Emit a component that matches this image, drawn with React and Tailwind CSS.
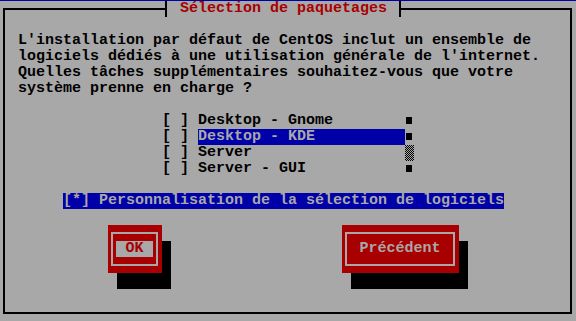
import React from 'react';

// newt text-mode dialog, 9x16 character cells
const lines = [
  "L'installation par défaut de CentOS inclut un ensemble de",
  "logiciels dédiés à une utilisation générale de l'internet.",
  'Quelles tâches supplémentaires souhaitez-vous que votre',
  'système prenne en charge ?',
];

const items = [
  { label: 'Desktop - Gnome', bar: 'dot' },
  { label: 'Desktop - KDE', bar: 'dot', active: true },
  { label: 'Server', bar: 'thumb' },
  { label: 'Server - GUI', bar: 'dot' },
];

function ScrollCell({ kind }) {
  if (kind === 'thumb') {
    return (
      <svg width="9" height="16" className="block shrink-0">
        <defs>
          <pattern id="chk" width="2" height="2" patternUnits="userSpaceOnUse">
            <rect width="2" height="2" fill="#a8a8a8" />
            <rect width="1" height="1" fill="#000" />
            <rect x="1" y="1" width="1" height="1" fill="#000" />
          </pattern>
        </defs>
        <rect width="9" height="16" fill="url(#chk)" />
      </svg>
    );
  }
  return (
    <div className="w-[9px] h-4 shrink-0 pt-[4px] pl-[1px]">
      <div className="w-[6px] h-[7px] bg-black" />
    </div>
  );
}

function Button({ label, focused, width }) {
  return (
    <div
      className={`${width} h-12 bg-[#a80000] shadow-[9px_16px_0_0_#000] pt-[7px] pl-[3px] pr-[4px] pb-[7px]`}
    >
      <div className="h-full border-2 border-[#a8a8a8] flex items-center justify-center">
        <span
          className={
            focused
              ? 'h-4 px-[9px] bg-[#a8a8a8] text-[#a80000] whitespace-pre'
              : 'h-4 px-[9px] text-[#a8a8a8] whitespace-pre'
          }
        >
          {label}
        </span>
      </div>
    </div>
  );
}

export default function App() {
  return (
    <div className="w-[576px] h-[321px] bg-[#0000a8] pt-px overflow-hidden font-['Liberation_Mono','DejaVu_Sans_Mono',monospace] font-bold text-[15px] leading-4 text-black">
      <div className="relative h-[320px] bg-[#a8a8a8] pt-[7px] pl-[3px]">
        {/* title sits over the top border */}
        <div className="absolute left-[165px] top-0 w-[236px] h-4 bg-[#a8a8a8] border-l-2 border-r-2 border-black pl-[13px] text-[#a80000] whitespace-pre">
          Sélection de paquetages
        </div>

        <div className="w-[569px] h-[306px] border-2 border-black">
          <div className="mt-[23px] ml-[13px] whitespace-pre">
            {lines.map((l) => (
              <div key={l} className="h-4">
                {l}
              </div>
            ))}
          </div>

          <div className="mt-4 ml-[157px]">
            {items.map((it) => (
              <div key={it.label} className="flex h-4">
                <span className="w-[36px] shrink-0 whitespace-pre">[ ] </span>
                <span
                  className={
                    it.active
                      ? 'w-[207px] shrink-0 bg-[#0000a8] text-[#a8a8a8] whitespace-pre'
                      : 'w-[207px] shrink-0 whitespace-pre'
                  }
                >
                  {it.label}
                </span>
                <ScrollCell kind={it.bar} />
              </div>
            ))}
          </div>

          <div className="mt-4 ml-[58px] flex">
            <span className="h-4 bg-[#0000a8] text-[#a8a8a8] whitespace-pre">
              [*] Personnalisation de la sélection de logiciels
            </span>
          </div>

          <div className="mt-4 ml-[103px] flex gap-[180px]">
            <Button label="OK" focused width="w-[54px]" />
            <Button label="Précédent" width="w-[117px]" />
          </div>
        </div>
      </div>
    </div>
  );
}
